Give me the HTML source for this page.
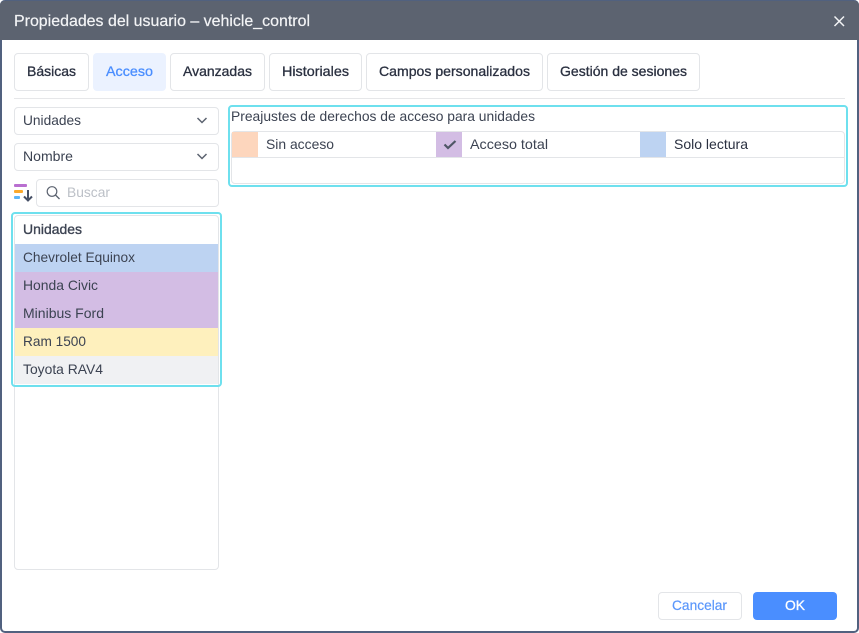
<!DOCTYPE html>
<html lang="es">
<head>
<meta charset="utf-8">
<title>Propiedades del usuario</title>
<style>
html,body{margin:0;padding:0;background:#fff;}
body{position:relative;width:859px;height:633px;overflow:hidden;font-family:"Liberation Sans",sans-serif;}
.a{position:absolute;box-sizing:border-box;}
.b{border:1px solid #e3e5e8;border-radius:4px;background:#fff;}
svg{position:absolute;left:0;top:0;}
text{font-family:"Liberation Sans",sans-serif;font-size:14px;fill:#3c4352;}
.tab{fill:#2a3040;stroke:#2a3040;stroke-width:.3px;}
</style>
</head>
<body>
<div class="a" style="left:0;top:0;width:859px;height:633px;background:#fff;border:2px solid #51617f;border-top:0;border-radius:5px;"></div>
<div class="a" style="left:0;top:0;width:859px;height:40px;background:#5c6370;border-top:1px solid #51617f;border-radius:5px 5px 0 0;"></div>

<div class="a b" style="left:14px;top:53px;width:75px;height:38px;"></div>
<div class="a" style="left:93px;top:53px;width:73px;height:38px;background:#ebf2ff;border-radius:4px;"></div>
<div class="a b" style="left:170px;top:53px;width:95px;height:38px;"></div>
<div class="a b" style="left:269px;top:53px;width:93px;height:38px;"></div>
<div class="a b" style="left:366px;top:53px;width:177px;height:38px;"></div>
<div class="a b" style="left:547px;top:53px;width:153px;height:38px;"></div>
<div class="a" style="left:14px;top:98px;width:831px;height:1px;background:#e6e7e9;"></div>

<div class="a b" style="left:14px;top:107px;width:205px;height:28px;"></div>
<div class="a b" style="left:14px;top:143px;width:205px;height:28px;"></div>
<div class="a b" style="left:36px;top:179px;width:183px;height:28px;"></div>

<div class="a b" style="left:14px;top:215px;width:205px;height:355px;"></div>
<div class="a" style="left:15px;top:244px;width:203px;height:28px;background:#bdd3f2;"></div>
<div class="a" style="left:15px;top:272px;width:203px;height:56px;background:#d3bde4;"></div>
<div class="a" style="left:15px;top:328px;width:203px;height:28px;background:#fef0bd;"></div>
<div class="a" style="left:15px;top:356px;width:203px;height:28px;background:#f0f1f3;"></div>
<div class="a" style="left:11px;top:212px;width:211px;height:175px;border:2px solid #6ee0ee;border-radius:4px;"></div>

<div class="a" style="left:228px;top:105px;width:620px;height:82px;border:2px solid #6ee0ee;border-radius:4px;"></div>
<div class="a b" style="left:231px;top:131px;width:614px;height:53px;"></div>
<div class="a" style="left:232px;top:157px;width:612px;height:1px;background:#e3e5e8;"></div>
<div class="a" style="left:232px;top:132px;width:26px;height:25px;background:#fdd6bd;"></div>
<div class="a" style="left:436px;top:132px;width:26px;height:25px;background:#d3bde4;"></div>
<div class="a" style="left:640px;top:132px;width:26px;height:25px;background:#bdd3f2;"></div>

<div class="a b" style="left:658px;top:592px;width:84px;height:28px;"></div>
<div class="a" style="left:753px;top:592px;width:84px;height:28px;background:#4a8eff;border-radius:4px;"></div>

<svg width="859" height="633" viewBox="0 0 859 633" xmlns="http://www.w3.org/2000/svg">
  <text x="14" y="26" textLength="296" lengthAdjust="spacingAndGlyphs" style="font-size:16px;fill:#f3f4f6;stroke:#f3f4f6;stroke-width:.2px;">Propiedades del usuario – vehicle_control</text>
  <path d="M834.5 16.5 L844 26 M844 16.5 L834.5 26" stroke="#f3f4f6" stroke-width="1.5" fill="none"/>

  <text class="tab" x="27" y="76" textLength="49" lengthAdjust="spacingAndGlyphs">Básicas</text>
  <text x="106" y="76" textLength="47" lengthAdjust="spacingAndGlyphs" style="fill:#4a8eff;stroke:#4a8eff;stroke-width:.3px;">Acceso</text>
  <text class="tab" x="183" y="76" textLength="69" lengthAdjust="spacingAndGlyphs">Avanzadas</text>
  <text class="tab" x="282" y="76" textLength="67" lengthAdjust="spacingAndGlyphs">Historiales</text>
  <text class="tab" x="379" y="76" textLength="151" lengthAdjust="spacingAndGlyphs">Campos personalizados</text>
  <text class="tab" x="560" y="76" textLength="127" lengthAdjust="spacingAndGlyphs">Gestión de sesiones</text>

  <text x="23" y="125" textLength="58" lengthAdjust="spacingAndGlyphs">Unidades</text>
  <path d="M197.5 118 L202 122.5 L206.5 118" stroke="#5c6370" stroke-width="1.5" fill="none"/>
  <text x="23" y="161" textLength="50" lengthAdjust="spacingAndGlyphs">Nombre</text>
  <path d="M197.5 154 L202 158.5 L206.5 154" stroke="#5c6370" stroke-width="1.5" fill="none"/>

  <rect x="14" y="184" width="13" height="3" rx="1" fill="#b96fd0"/>
  <rect x="14" y="190" width="9" height="3" rx="1" fill="#fba92c"/>
  <rect x="14" y="196" width="6" height="3" rx="1" fill="#5db5f8"/>
  <path d="M28 190 V200.5 M24 196.5 L28 200.5 L32 196.5" stroke="#465066" stroke-width="2" fill="none"/>

  <circle cx="52" cy="191.5" r="4.8" stroke="#5c6370" stroke-width="1.2" fill="none"/>
  <path d="M55.5 195 L59.5 199" stroke="#5c6370" stroke-width="1.3" fill="none"/>
  <text x="67" y="197" textLength="43" lengthAdjust="spacingAndGlyphs" style="fill:#bcc0c7;">Buscar</text>

  <text x="23" y="234" textLength="59" lengthAdjust="spacingAndGlyphs" style="stroke:#3c4352;stroke-width:.35px;">Unidades</text>
  <text x="23" y="262" textLength="112" lengthAdjust="spacingAndGlyphs">Chevrolet Equinox</text>
  <text x="23" y="290" textLength="75" lengthAdjust="spacingAndGlyphs">Honda Civic</text>
  <text x="23" y="318" textLength="81" lengthAdjust="spacingAndGlyphs">Minibus Ford</text>
  <text x="23" y="346" textLength="63" lengthAdjust="spacingAndGlyphs">Ram 1500</text>
  <text x="23" y="374" textLength="80" lengthAdjust="spacingAndGlyphs">Toyota RAV4</text>

  <text x="231" y="121" textLength="304" lengthAdjust="spacingAndGlyphs">Preajustes de derechos de acceso para unidades</text>
  <text x="266" y="149" textLength="68" lengthAdjust="spacingAndGlyphs">Sin acceso</text>
  <path d="M444.5 144.5 L448 148 L455.5 141" stroke="#4f5666" stroke-width="2.2" fill="none"/>
  <text x="470" y="149" textLength="78" lengthAdjust="spacingAndGlyphs">Acceso total</text>
  <text x="674" y="149" textLength="74" lengthAdjust="spacingAndGlyphs" style="fill:#2a3040;">Solo lectura</text>

  <text x="672" y="610" textLength="55" lengthAdjust="spacingAndGlyphs" style="fill:#5b97fb;stroke:#5b97fb;stroke-width:.2px;">Cancelar</text>
  <text x="785" y="610" textLength="20" lengthAdjust="spacingAndGlyphs" style="fill:#fff;stroke:#fff;stroke-width:.3px;">OK</text>
</svg>
</body>
</html>
